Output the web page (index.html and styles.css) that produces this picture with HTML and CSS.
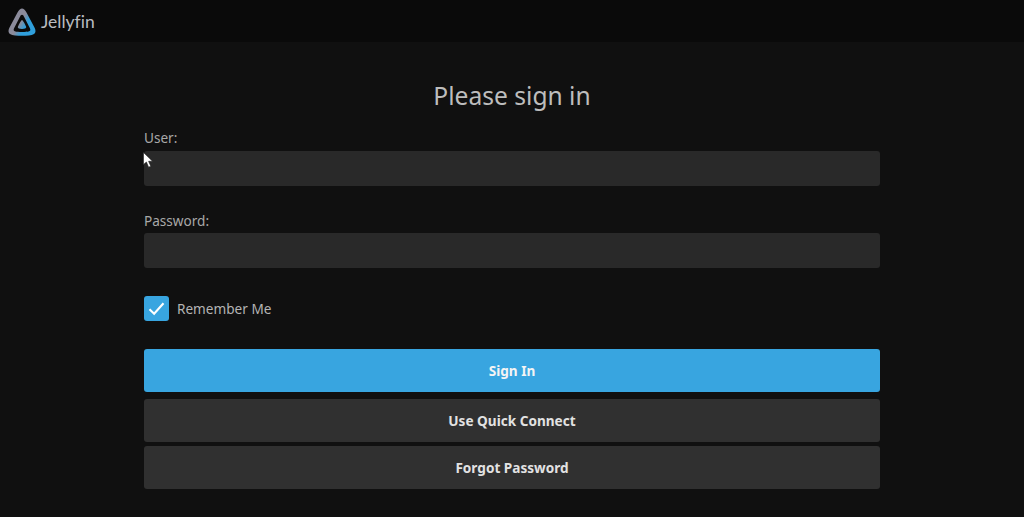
FILE: index.html
```html
<!DOCTYPE html>
<html lang="en">
<head>
<meta charset="utf-8">
<title>Jellyfin</title>
<link rel="stylesheet" href="styles.css">
</head>
<body>
<header class="topbar">
  <svg class="logo" viewBox="0 0 28 28" width="28" height="28" aria-hidden="true">
    <defs>
      <linearGradient id="lg" gradientUnits="userSpaceOnUse" x1="4" y1="8" x2="24" y2="20">
        <stop offset="0.45" stop-color="#8b8b9b"/>
        <stop offset="0.72" stop-color="#2f9fdc"/>
      </linearGradient>
    </defs>
    <path fill="url(#lg)" fill-rule="evenodd" d="M14 0.500 C12.500 0.500 11 1.900 9.500 4.500 L1.400 19.800 C-0.200 23 .6 25 2 26 C4.500 27.500 9 27.800 14 27.800 C19 27.800 23.500 27.500 26 26 C27.400 25 28.200 23 26.600 19.800 L18.500 4.500 C17 1.900 15.500 0.500 14 0.500 Z M14 6.800 C15 6.800 15.500 7.600 16.300 9.300 L21.800 20 C22.800 22 22.300 22.800 21.200 23.200 C19.600 23.800 17 24 14 24 C11 24 8.400 23.800 6.800 23.200 C5.700 22.800 5.200 22 6.200 20 L11.700 9.300 C12.500 7.600 13 6.800 14 6.800 Z"/>
    <path fill="url(#lg)" d="M14 12 C13 12 10.200 17.800 9.800 19 C9.400 20.300 11.500 21 14 21 C16.500 21 18.600 20.300 18.200 19 C17.800 17.800 15 12 14 12 Z"/>
  </svg>
  <span class="brand">Jellyfin</span>
</header>
<main class="page">
  <h1 class="title">Please sign in</h1>
  <form class="form">
    <label class="label label-user" for="user">User:</label>
    <input class="input" id="user" type="text">
    <label class="label label-pass" for="pass">Password:</label>
    <input class="input" id="pass" type="password">
    <div class="remember">
      <span class="check">
        <svg viewBox="0 0 24 24" width="21" height="21" aria-hidden="true"><path d="M4 12.800 L9.300 18 L20 6" fill="none" stroke="#fff" stroke-width="2.400"/></svg>
      </span>
      <span class="remember-text">Remember Me</span>
    </div>
    <button class="btn btn-primary" type="button">Sign In</button>
    <button class="btn btn-quick" type="button">Use Quick Connect</button>
    <button class="btn btn-forgot" type="button">Forgot Password</button>
  </form>
</main>
<svg class="cursor" viewBox="0 0 12 18" width="12" height="18" aria-hidden="true"><path d="M0.500 0.500 L0.500 12.500 L3.400 10 L5.600 15.200 L7.800 14.200 L5.600 9.300 L9.500 9.200 Z" fill="#fff" stroke="#222" stroke-width="0.600"/></svg>
</body>
</html>
```
FILE: styles.css
```css
* { box-sizing: border-box; }
html, body { margin: 0; height: 100%; }
body {
  position: relative;
  overflow: hidden;
  background: #101010;
  color: #c4c4c4;
  font-family: "Noto Sans", sans-serif;
}
.topbar {
  height: 42px;
  background: #0a0a0a;
  display: flex;
  align-items: center;
  padding-left: 8px;
  gap: 5px;
}
.logo { flex: none; margin-top: 2px; }
.brand {
  font-family: "Lato", sans-serif;
  font-size: 17.5px;
  color: #b9bcc0;
  font-variant-ligatures: none;
}
.page { width: 736px; margin: 0 auto; }
.title {
  margin: 36px 0 0;
  height: 36px;
  line-height: 36px;
  text-align: center;
  font-size: 24.6px;
  font-weight: 400;
  color: #bdbdbd;
}
.form { display: flex; flex-direction: column; }
.label {
  font-size: 13.6px;
  line-height: 19px;
  color: #a8a8a8;
}
.label-user { margin-top: 14px; margin-bottom: 4px; }
.label-pass { margin-top: 25px; margin-bottom: 3px; }
.input {
  height: 35px;
  border: 0;
  border-radius: 3px;
  background: #292929;
  padding: 0 8px;
}
.remember {
  display: flex;
  align-items: center;
  gap: 8px;
  margin-top: 28px;
}
.check {
  width: 25px;
  height: 25px;
  border-radius: 3px;
  background: #38a5e0;
  display: flex;
  align-items: center;
  justify-content: center;
}
.remember-text { font-size: 13.6px; color: #b4b4b4; }
.btn {
  height: 43px;
  border: 0;
  border-radius: 3px;
  font-family: inherit;
  font-size: 13.6px;
  font-weight: 700;
  color: #e2e2e2;
  background: #303030;
  padding: 0;
}
.btn-primary { background: #38a5e0; color: #f4f4f4; margin-top: 28px; }
.btn-quick { margin-top: 7px; }
.btn-forgot { margin-top: 4px; }
.cursor { position: absolute; left: 143px; top: 152px; }
```
